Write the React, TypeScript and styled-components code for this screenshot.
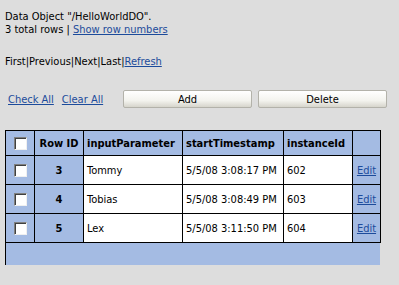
import styled, { createGlobalStyle } from "styled-components";

const GlobalStyle = createGlobalStyle`
  html, body {
    margin: 0;
    padding: 0;
    background: #dddddd;
  }
  body {
    font-family: "DejaVu Sans Condensed", "DejaVu Sans", Tahoma, sans-serif;
    font-size: 11px;
    color: #000;
  }
`;

const rows = [
  { id: 3, name: "Tommy", time: "5/5/08 3:08:17 PM", instance: "602" },
  { id: 4, name: "Tobias", time: "5/5/08 3:08:49 PM", instance: "603" },
  { id: 5, name: "Lex", time: "5/5/08 3:11:50 PM", instance: "604" },
];

export default function App() {
  return (
    <>
      <GlobalStyle />
      <Page>
        <Info>
          <div>Data Object "/HelloWorldDO".</div>
          <div>
            3 total rows | <Link href="#">Show row numbers</Link>
          </div>
        </Info>
        <Pager>
          First|Previous|Next|Last|<Link href="#">Refresh</Link>
        </Pager>
        <Actions>
          <LinkGroup>
            <Link href="#">Check All</Link>
            <Link href="#">Clear All</Link>
          </LinkGroup>
          <ButtonGroup>
            <Button>Add</Button>
            <Button>Delete</Button>
          </ButtonGroup>
        </Actions>
        <Grid>
          <Table>
            <thead>
              <tr>
                <BlueCell $w={29}>
                  <Check />
                </BlueCell>
                <HeadCell $w={49} $center>
                  Row ID
                </HeadCell>
                <HeadCell $w={99}>inputParameter</HeadCell>
                <HeadCell $w={101}>startTimestamp</HeadCell>
                <HeadCell $w={69}>instanceId</HeadCell>
                <BlueCell $w={28} />
              </tr>
            </thead>
            <tbody>
              {rows.map((r) => (
                <tr key={r.id}>
                  <BlueCell>
                    <Check />
                  </BlueCell>
                  <IdCell>{r.id}</IdCell>
                  <Cell>{r.name}</Cell>
                  <Cell>{r.time}</Cell>
                  <Cell>{r.instance}</Cell>
                  <BlueCell>
                    <Link href="#">Edit</Link>
                  </BlueCell>
                </tr>
              ))}
            </tbody>
          </Table>
          <Footer />
        </Grid>
      </Page>
    </>
  );
}

const Page = styled.div`
  display: flex;
  flex-direction: column;
  padding: 10px 0 0 5px;
`;

const Info = styled.div`
  line-height: 13px;
`;

const Pager = styled.div`
  margin-top: 19px;
  line-height: 13px;
`;

const Link = styled.a`
  color: #1c4b9b;
  text-decoration: underline;
`;

const Actions = styled.div`
  display: flex;
  align-items: center;
  margin-top: 22px;
  height: 18px;
`;

const LinkGroup = styled.div`
  display: flex;
  gap: 8px;
  padding-left: 3px;
  width: 115px;
`;

const ButtonGroup = styled.div`
  display: flex;
  gap: 6px;
`;

const Button = styled.button`
  width: 129px;
  height: 18px;
  padding: 0;
  font-family: inherit;
  font-size: 11px;
  color: #000;
  border: 1px solid #b3b2aa;
  border-radius: 2px;
  background: linear-gradient(#ffffff, #f3f3ee 60%, #d6d5cc);
`;

const Grid = styled.div`
  margin-top: 22px;
  width: 375px;
`;

const Table = styled.table`
  border-collapse: collapse;
  width: 375px;
  table-layout: fixed;

  tr {
    height: 29px;
  }
  thead tr {
    height: 25px;
  }
  td,
  th {
    border: 1px solid #000;
    padding: 0 3px;
    font-size: 11px;
  }
`;

const BlueCell = styled.td<{ $w?: number }>`
  background: #a4bbe3;
  text-align: center;
  width: ${(p) => (p.$w ? `${p.$w - 7}px` : "auto")};
`;

const HeadCell = styled.th<{ $w: number; $center?: boolean }>`
  background: #a4bbe3;
  font-weight: bold;
  text-align: ${(p) => (p.$center ? "center" : "left")};
  width: ${(p) => p.$w - 7}px;
  white-space: nowrap;
  overflow: hidden;
`;

const IdCell = styled.td`
  background: #a4bbe3;
  font-weight: bold;
  text-align: center;
`;

const Cell = styled.td`
  background: #fff;
  white-space: nowrap;
`;

const Check = styled.span`
  display: inline-block;
  vertical-align: middle;
  width: 11px;
  height: 11px;
  background: #fff;
  border-top: 1px solid #808080;
  border-left: 1px solid #808080;
  border-right: 1px solid #f0f0f0;
  border-bottom: 1px solid #f0f0f0;
  box-shadow: inset 1px 1px 0 #404040;
`;

const Footer = styled.div`
  height: 22px;
  background: #a4bbe3;
  border-left: 1px solid #000;
`;
